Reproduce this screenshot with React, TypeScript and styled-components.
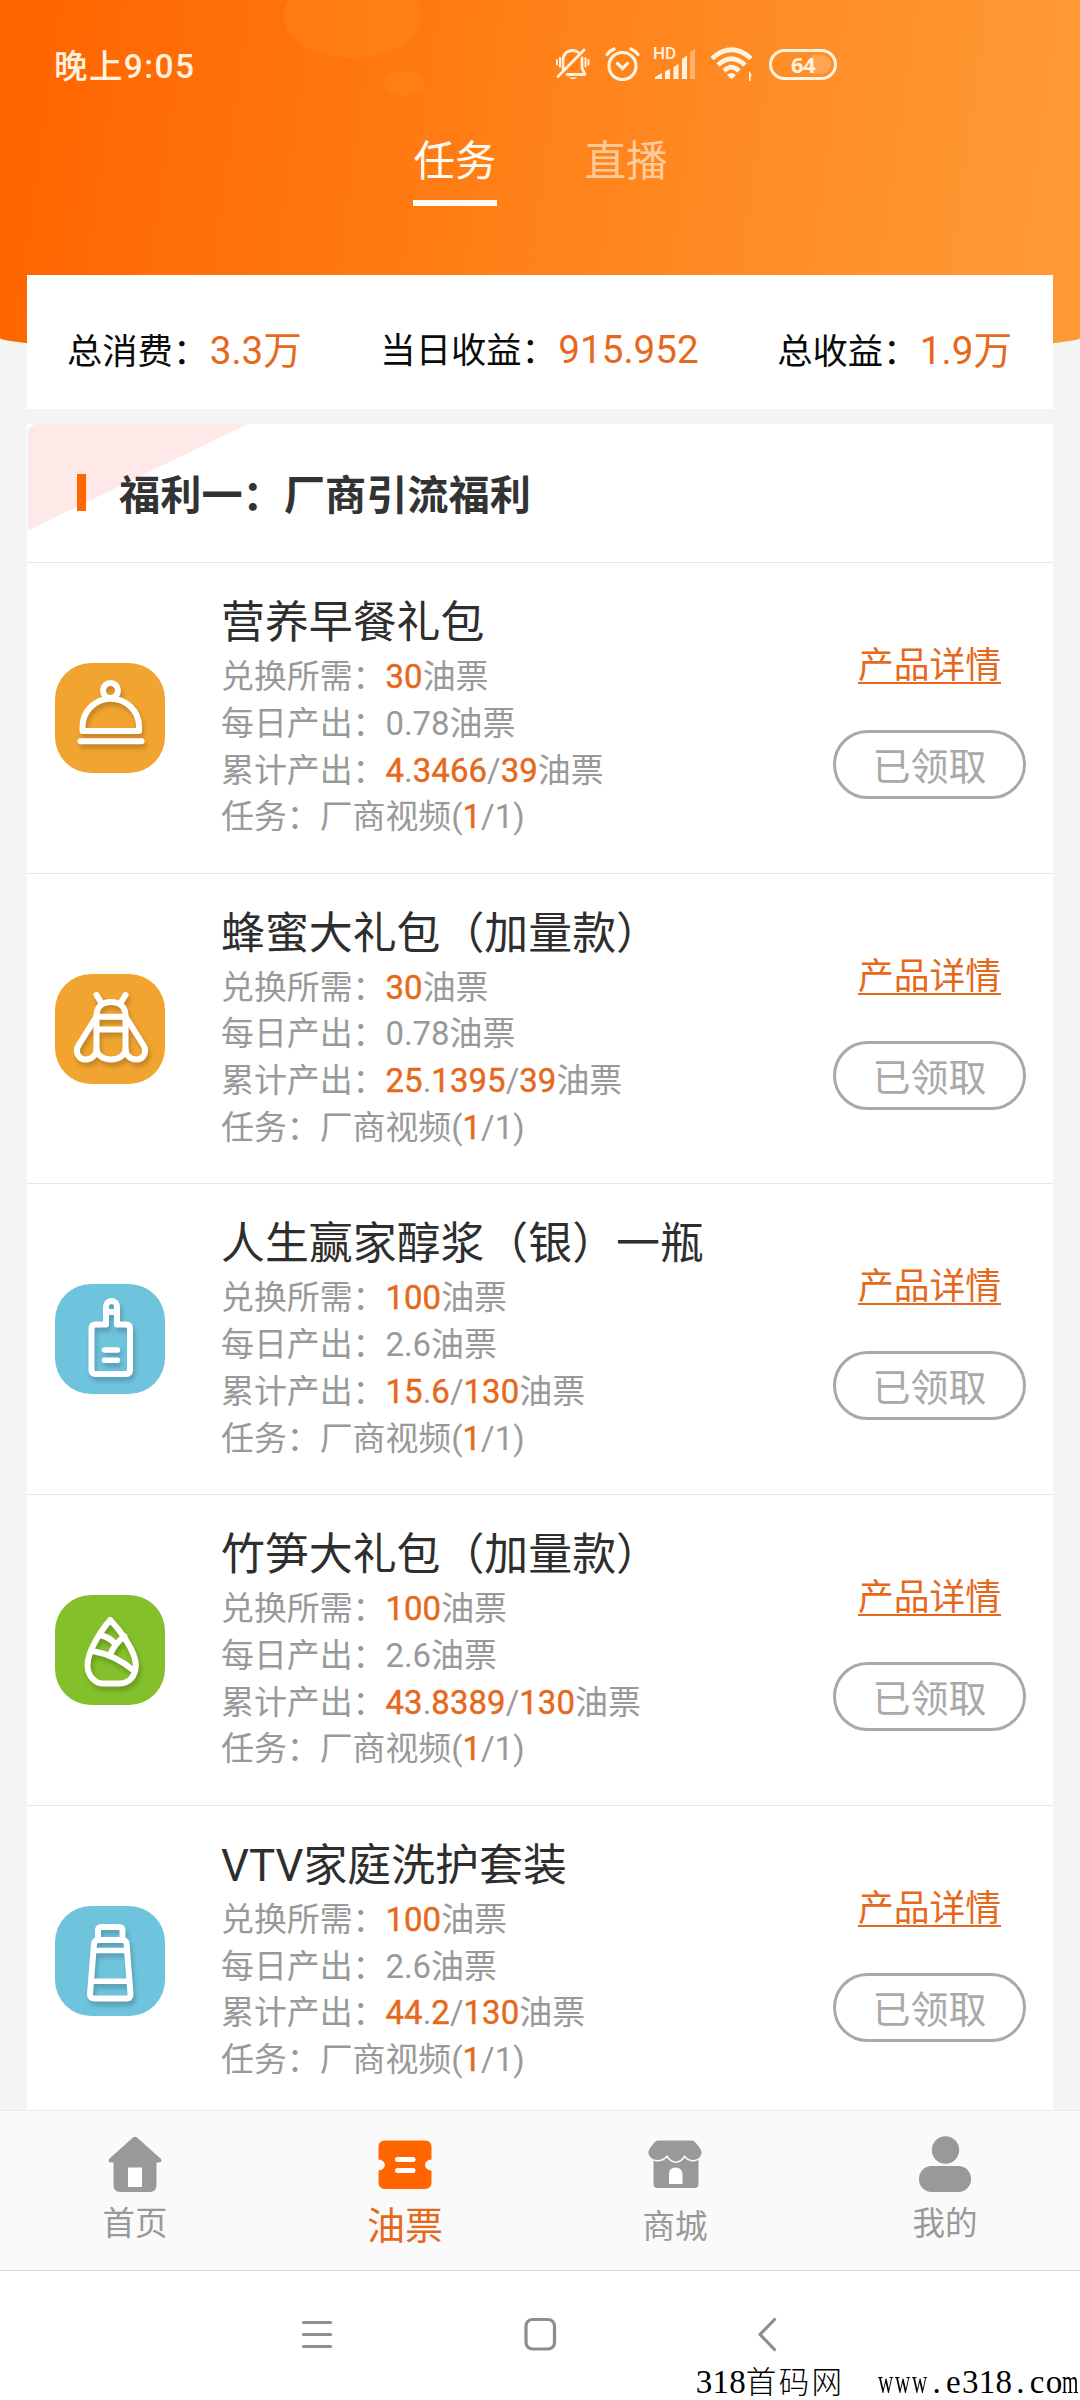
import React from 'react';
import styled, { createGlobalStyle } from 'styled-components';

const GlobalStyle = createGlobalStyle`
  * { box-sizing: border-box; }
  body {
    margin: 0;
    background: #f4f4f4;
    font-family: Roboto, "Noto Sans CJK SC", sans-serif;
  }
`;

const Screen = styled.div`
  width: 1080px;
  height: 2400px;
  overflow: hidden;
  display: flex;
  flex-direction: column;
  background: #f4f4f4;
`;

const Header = styled.header`
  flex: none;
  height: 354px;
  border-radius: 0 0 540px 540px / 0 0 16px 16px;
  background:
    radial-gradient(ellipse 69px 42px at 352px 16px, rgba(255, 150, 40, 0.24) 98%, transparent 100%),
    radial-gradient(ellipse 20px 12px at 404px 83px, rgba(255, 150, 40, 0.22) 96%, transparent 100%),
    linear-gradient(98deg, #ff6600 5%, #ff8018 48%, #ff9934 94%);
`;

const StatusBar = styled.div`
  display: flex;
  align-items: center;
  height: 128px;
  padding-left: 54px;
  color: #fff3e0;
`;

const Clock = styled.div`
  width: 501px;
  margin-top: -2px;
  font-size: 33.5px;
  font-weight: 500;
  letter-spacing: 1.4px;
`;

const StatusIcons = styled.div`
  display: flex;
  align-items: center;
  gap: 15px;
  svg { display: block; }
`;

const Signal = styled.div`
  position: relative;
  width: 42px;
  height: 34px;
  margin-right: -1px;
`;

const HdMark = styled.span`
  position: absolute;
  left: -2px;
  top: -1px;
  font-size: 17px;
  line-height: 15px;
  font-weight: 500;
`;

const Battery = styled.div`
  width: 68px;
  height: 31px;
  border: 3px solid #fff3e0;
  border-radius: 16px;
  padding: 3px;
`;

const Charge = styled.div`
  height: 19px;
  border-radius: 10px;
  background: linear-gradient(90deg, transparent 66%, rgba(255, 255, 255, 0.2) 66%);
  text-align: center;
  font: 700 22px/19px "Open Sans", sans-serif;
  letter-spacing: -0.5px;
`;

const TopTabs = styled.nav`
  display: flex;
  justify-content: center;
  gap: 88px;
  padding-left: 1px;
`;

const TopTab = styled.div<{ $active?: boolean }>`
  height: 78px;
  padding-top: 4px;
  font-size: 41.5px;
  line-height: 60px;
  color: ${p => (p.$active ? '#fffaf2' : 'rgba(255, 245, 225, 0.65)')};
  border-bottom: 6px solid ${p => (p.$active ? '#fffaf2' : 'transparent')};
`;

const Stats = styled.section`
  flex: none;
  display: flex;
  align-items: center;
  justify-content: space-between;
  height: 134px;
  margin: -79px 27px 0;
  padding: 10px 41px 0 40px;
  background: #fff;
`;

const Stat = styled.div`
  display: flex;
  align-items: baseline;
  font-size: 35.3px;
  color: #0a0a0a;
`;

const StatValue = styled.span`
  margin-left: 1.5px;
  font-size: 38.6px;
  color: #e5691c;
`;

const Welfare = styled.section`
  flex: none;
  height: 1686px;
  overflow: hidden;
  margin: 15px 27px 0;
  background: #fff;
`;

const WelfareTitle = styled.h2`
  display: flex;
  align-items: center;
  gap: 33px;
  height: 138px;
  margin: 0;
  padding: 0 0 2px 50px;
  font-size: 41.2px;
  font-weight: 700;
  color: #333;
  border-top-left-radius: 10px;
  background: linear-gradient(to bottom right, #ffe8e8 50%, transparent 50.4%) no-repeat 1px 0 / 219px 106px;
`;

const Accent = styled.i`
  width: 9px;
  height: 37px;
  background: #ff6600;
`;

const Row = styled.article`
  display: flex;
  height: 310.7px;
  border-top: 1px solid #e6e6e6;
  padding: 0 28px;
`;

const Tile = styled.div<{ $color: string }>`
  align-self: center;
  width: 110px;
  height: 110px;
  border-radius: 36px;
  background: ${p => p.$color};
  svg {
    display: block;
    fill: none;
    stroke: #fff;
    stroke-width: 6;
    stroke-linecap: round;
    stroke-linejoin: round;
    filter: drop-shadow(2px 4px 2px rgba(0, 0, 0, 0.2));
  }
`;

const Info = styled.div`
  flex: 1;
  padding: 32px 0 0 56px;
  white-space: nowrap;
`;

const Name = styled.h3`
  margin: 0 0 3px;
  font-size: 43.9px;
  line-height: 56px;
  font-weight: 400;
  color: #2e2e2e;
`;

const Line = styled.p`
  margin: 0;
  font-size: 32.9px;
  line-height: 46.8px;
  color: #999;
`;

const Hot = styled.span`
  color: #e5691c;
  letter-spacing: 0.1px;
  -webkit-text-stroke: 0.45px #e5691c;
`;

const Actions = styled.div`
  display: flex;
  flex-direction: column;
  align-items: center;
  width: 193px;
  margin-right: -1px;
  padding-top: 79px;
`;

const Detail = styled.a`
  height: 42px;
  line-height: 49px;
  font-size: 35.8px;
  color: #e5691c;
  border-bottom: 2px solid #e5691c;
`;

const Claimed = styled.div`
  width: 193px;
  height: 69px;
  margin-top: 46px;
  border: 3px solid #a9a9a9;
  border-radius: 35px;
  text-align: center;
  font-size: 38px;
  line-height: 68px;
  color: #a9a9a9;
`;

const TabBar = styled.nav`
  flex: none;
  display: flex;
  height: 161px;
  border-top: 1px solid #ececec;
  border-bottom: 1px solid #d8d8d8;
  background: #fafafa;
`;

const TabItem = styled.div<{ $active?: boolean }>`
  flex: 1;
  display: flex;
  flex-direction: column;
  align-items: center;
  padding-top: 25px;
  color: ${p => (p.$active ? '#e5691c' : '#999')};
  svg { display: block; }
`;

const TabLabel = styled.span<{ $size: number; $gap: number }>`
  margin-top: ${p => p.$gap}px;
  font-size: ${p => p.$size}px;
  line-height: 44px;
`;

const SystemNav = styled.footer`
  flex: none;
  height: 129px;
  display: flex;
  flex-direction: column;
  background: #fff;
`;

const NavKeys = styled.div`
  display: flex;
  height: 94px;
  padding: 45px 0 0 300px;
  gap: 190px;
  svg { display: block; fill: none; stroke: #8d8d8d; stroke-width: 3.2; stroke-linecap: round; }
`;

const Watermark = styled.div`
  align-self: flex-end;
  height: 35px;
  margin-right: 1px;
  font: 33px/35px "Liberation Serif", "Noto Sans CJK SC", serif;
  color: #000;
  white-space: pre;
`;

const Hanzi = styled.span`
  font-family: "Noto Sans CJK SC", sans-serif;
  font-weight: 300;
  font-size: 30.5px;
  line-height: 30px;
  letter-spacing: 2.4px;
`;

const Cell = styled.span<{ $squeeze?: boolean }>`
  display: inline-block;
  width: 16.75px;
  ${p => (p.$squeeze ? 'transform: scaleX(0.64); transform-origin: left;' : 'text-align: center;')}
`;

const halfWidth = (text: string) =>
  [...text].map((c, i) => <Cell key={i} $squeeze={c === 'w' || c === 'm'}>{c}</Cell>);

const icons = {
  cloche: (
    <>
      <circle cx="55.5" cy="27.5" r="7.5" />
      <path d="M27.5 68V64a28.3 28.3 0 0 1 56.6 0V68Z" />
      <path d="M25.5 78.2H86.5" />
    </>
  ),
  bee: (
    <>
      <path d="M41.5 21 45.5 27.5M70.5 21 66.5 27.5" />
      <path d="M41.5 75V42C41.5 32 48 28 56 28S70.5 32 70.5 42V75C70.5 80.5 64 85.5 56 85.5S41.5 80.5 41.5 75" />
      <path d="M41.5 42.7H70.5M41.5 55.5H70.5" />
      <path d="M41.5 42.7 24 70.5C19 78 24 85.5 30.5 85.5S41.5 80.5 41.5 75" />
      <path d="M70.5 42.7 88 70.5C93 78 88 85.5 81.5 85.5S70.5 80.5 70.5 75" />
    </>
  ),
  flask: (
    <>
      <path d="M51 40.5H40.5Q36.5 40.5 36.5 44.5V86Q36.5 90 40.5 90H71Q75 90 75 86V44.5Q75 40.5 71 40.5H62V22.5a5.5 5.5 0 0 0-11 0V40.5M51 28H62" />
      <path d="M49.5 66H62.5M49.5 76.3H62.5" strokeWidth="5.4" />
    </>
  ),
  shoot: (
    <>
      <path d="M55.3 25C47 34 32.5 56 32.5 70C32.5 83 42 88.5 48 88.5H65C73 88.5 80.8 82 80.8 70C80.8 56 64 34 55.3 25Z" />
      <path d="M37.5 56Q60 60 78 75M46.5 40.5Q54 42 60 48.5M69.5 41.5Q59 49 55 60" />
    </>
  ),
  bottle: (
    <>
      <path d="M43 33V24.5Q43 21 46.5 21H64Q67.5 21 67.5 24.5V33" />
      <path d="M39 38Q39.5 34 43.5 34H67.5Q71.3 34 71.6 38L75.5 88Q75.5 92.5 71.5 92.5H39.5Q34.8 92.5 35 88Z" />
      <path d="M39.5 44.5H71M37 75.2H74" strokeWidth="5.4" />
    </>
  ),
};

type Product = {
  name: string;
  icon: keyof typeof icons;
  color: string;
  cost: string;
  daily: string;
  earned: string;
  total: string;
};

const products: Product[] = [
  { name: '营养早餐礼包', icon: 'cloche', color: '#f1a530', cost: '30', daily: '0.78', earned: '4.3466', total: '39' },
  { name: '蜂蜜大礼包（加量款）', icon: 'bee', color: '#f1a530', cost: '30', daily: '0.78', earned: '25.1395', total: '39' },
  { name: '人生赢家醇浆（银）一瓶', icon: 'flask', color: '#6ec3dd', cost: '100', daily: '2.6', earned: '15.6', total: '130' },
  { name: '竹笋大礼包（加量款）', icon: 'shoot', color: '#83c02b', cost: '100', daily: '2.6', earned: '43.8389', total: '130' },
  { name: 'VTV家庭洗护套装', icon: 'bottle', color: '#6ec3dd', cost: '100', daily: '2.6', earned: '44.2', total: '130' },
];

// Only the digits of an amount are highlighted; the decimal point keeps the line colour.
const Amount = ({ value }: { value: string }) => (
  <>
    {value.split('.').map((part, i) => (
      <React.Fragment key={i}>
        {i > 0 && '.'}
        <Hot>{part}</Hot>
      </React.Fragment>
    ))}
  </>
);

const ProductRow = ({ product: p }: { product: Product }) => (
  <Row>
    <Tile $color={p.color}>
      <svg width="110" height="110" viewBox="0 0 110 110">{icons[p.icon]}</svg>
    </Tile>
    <Info>
      <Name>{p.name}</Name>
      <Line>兑换所需：<Hot>{p.cost}</Hot>油票</Line>
      <Line>每日产出：{p.daily}油票</Line>
      <Line>累计产出：<Amount value={p.earned} />/<Hot>{p.total}</Hot>油票</Line>
      <Line>任务：厂商视频(<Hot>1</Hot>/1)</Line>
    </Info>
    <Actions>
      <Detail>产品详情</Detail>
      <Claimed>已领取</Claimed>
    </Actions>
  </Row>
);

const StatusIconRow = () => (
  <StatusIcons>
    <svg width="35" height="34" viewBox="0 0 35 34" fill="none" stroke="#fff3e0" strokeWidth="2.8" strokeLinecap="round">
      <path d="M8 22V13.5C8 7 12 3.5 17.5 3.5C20 3.5 22 4.3 23.5 5.5M27 11V21L30 27.5H12" strokeLinejoin="round" />
      <path d="M29 3 3 29.5" />
      <path d="M2 13V17.500M5 11V19.500M30.500 11V19.500M33.500 13V17.500" strokeWidth="1.900" />
      <path d="M13.5 30.5H22Q17.7 34 13.5 30.5Z" fill="#fff3e0" stroke="none" />
    </svg>
    <svg width="35" height="36" viewBox="0 0 35 36" fill="none" stroke="#fff3e0" strokeWidth="3.2" strokeLinecap="round">
      <circle cx="17.5" cy="20" r="13.5" />
      <path d="M2 8.5Q5 4.5 9 3M33 8.5Q30 4.5 26 3M12.5 17.5 17.5 22.5 22.5 17.5" />
    </svg>
    <Signal>
      <HdMark>HD</HdMark>
      <svg width="42" height="34" viewBox="0 0 42 34" fill="#fff3e0">
        <path d="M0 32V30L7 26V32ZM10 24.5 15 22V32H10ZM18.5 20 23.5 17V32H18.5ZM27 12 32 8.5V32H27Z" />
        <path d="M35 5 40 2V32H35Z" opacity=".4" />
      </svg>
    </Signal>
    <svg width="43" height="36" viewBox="0 0 43 36" fill="none" stroke="#fff3e0" strokeWidth="4.6">
      <path d="M1 12.5Q20.5-5 40 12.5M7 19Q20.5 6.5 34 19M13 25Q20.5 17.5 28 25" />
      <path d="M16 29Q20.5 25 25 29L20.5 33.5Z" fill="#fff3e0" stroke="none" />
      <path d="M38 25 41 29.5H39.7V35H38Z" fill="#fff3e0" stroke="none" />
    </svg>
    <Battery><Charge>64</Charge></Battery>
  </StatusIcons>
);

const HomeIcon = () => (
  <svg width="54" height="56" viewBox="0 0 54 56" fill="#999">
    <path d="M25 1.5Q27 0 29 1.5L53 23Q54.5 26.5 51 26.5H48.5V49Q48.5 56 42 56H12Q5.5 56 5.5 49V26.5H3Q-.5 26.5 1 23Z" />
    <path d="M20 31.5H34V51H20Z" fill="#fff" />
  </svg>
);

const TicketIcon = () => (
  <svg width="54" height="56" viewBox="0 0 54 56">
    <path d="M7 4.5H47Q53.5 4.5 53.5 11V23.5C45 24 45 34 53.5 34.5V46.5Q53.5 53 47 53H7Q.5 53 .5 46.5V34.5C9 34 9 24 .5 23.5V11Q.5 4.5 7 4.5Z" fill="#ff6600" />
    <path d="M19.5 23.5H35M19.5 34.5H35" stroke="#fff" strokeWidth="5" strokeLinecap="round" />
  </svg>
);

const ShopIcon = () => (
  <svg width="54" height="56" viewBox="0 0 54 56" fill="#999">
    <path d="M5.5 22H50.5V48Q50.5 52 46.5 52H9.5Q5.5 52 5.5 48Z" />
    <path
      d="M10 4.5H44Q46 4.5 47.5 6.500C51 11 53.500 13.500 53.500 16.500C53.500 24 42 27.500 36.500 19C32 27.500 24 27.500 19 19C12.500 27.500 .500 24 .500 16.500C.500 13.500 3 11 6.500 6.500Q8 4.500 10 4.500Z"
      stroke="#fafafa"
      strokeWidth="3"
      paintOrder="stroke"
    />
    <path d="M21 48V38Q21 31.5 27.5 31.5T34.500 38V48Z" fill="#fff" />
  </svg>
);

const UserIcon = () => (
  <svg width="54" height="56" viewBox="0 0 54 56" fill="#999">
    <circle cx="27.5" cy="14" r="13.7" />
    <rect x="1" y="30" width="52" height="26" rx="12.5" />
  </svg>
);

export default function App() {
  return (
    <Screen>
      <GlobalStyle />
      <Header>
        <StatusBar>
          <Clock>晚上9:05</Clock>
          <StatusIconRow />
        </StatusBar>
        <TopTabs>
          <TopTab $active>任务</TopTab>
          <TopTab>直播</TopTab>
        </TopTabs>
      </Header>
      <Stats>
        <Stat>总消费：<StatValue>3.3万</StatValue></Stat>
        <Stat>当日收益：<StatValue>915.952</StatValue></Stat>
        <Stat>总收益：<StatValue>1.9万</StatValue></Stat>
      </Stats>
      <Welfare>
        <WelfareTitle><Accent />福利一：厂商引流福利</WelfareTitle>
        {products.map(p => <ProductRow key={p.name} product={p} />)}
      </Welfare>
      <TabBar>
        <TabItem><HomeIcon /><TabLabel $size={32.5} $gap={10}>首页</TabLabel></TabItem>
        <TabItem $active><TicketIcon /><TabLabel $size={38} $gap={12}>油票</TabLabel></TabItem>
        <TabItem><ShopIcon /><TabLabel $size={32.5} $gap={13}>商城</TabLabel></TabItem>
        <TabItem><UserIcon /><TabLabel $size={32.5} $gap={10}>我的</TabLabel></TabItem>
      </TabBar>
      <SystemNav>
        <NavKeys>
          <svg width="34" height="36" viewBox="0 0 34 36"><path d="M3.5 6.5H30.5M3.5 18.5H30.5M3.5 30.5H30.5" /></svg>
          <svg width="34" height="36" viewBox="0 0 34 36"><rect x="2" y="3.5" width="28.5" height="29.5" rx="6.5" /></svg>
          <svg width="34" height="36" viewBox="0 0 34 36"><path d="M26.5 3.5 12 18.5 26.5 33.5" strokeLinejoin="round" /></svg>
        </NavKeys>
        <Watermark>{halfWidth('318')}<Hanzi>首码网</Hanzi>{halfWidth('  www.e318.com')}</Watermark>
      </SystemNav>
    </Screen>
  );
}
